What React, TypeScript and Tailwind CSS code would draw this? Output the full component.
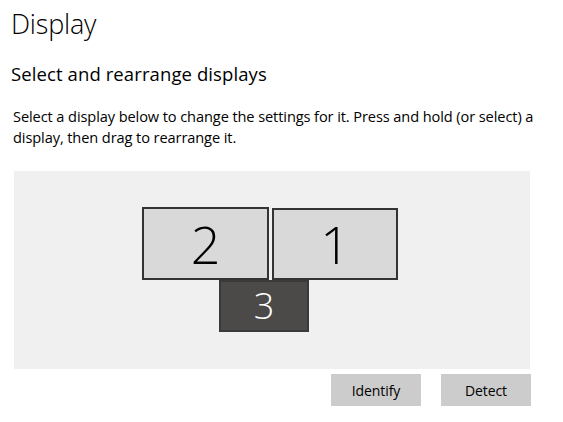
import React from "react";

type Monitor = {
  id: number;
  left: number;
  top: number;
  width: number;
  height: number;
  active?: boolean;
};

const monitors: Monitor[] = [
  { id: 2, left: 128, top: 36, width: 127, height: 73 },
  { id: 1, left: 258, top: 37, width: 126, height: 72 },
  { id: 3, left: 205, top: 109, width: 90, height: 52, active: true },
];

const MonitorTile = ({ monitor }: { monitor: Monitor }) => {
  const box = monitor.active
    ? "bg-[#4c4a48] border-[#3a3a3a] text-white text-[36px]"
    : "bg-[#d9d9d9] border-[#333333] text-black text-[52px]";
  return (
    <div
      className={`absolute flex items-center justify-center border-2 font-light leading-none ${box}`}
      style={{
        left: monitor.left,
        top: monitor.top,
        width: monitor.width,
        height: monitor.height,
      }}
    >
      {monitor.id}
    </div>
  );
};

export default function App() {
  return (
    <div className="w-[563px] h-[422px] bg-white text-black font-['Open_Sans','Noto_Sans',sans-serif] overflow-hidden">
      <div className="pl-[11px] pt-[6px]">
        <h1 className="text-[27px] font-light leading-[36px] tracking-[-0.2px]">Display</h1>
        <h2 className="mt-[19px] text-[18.5px] leading-[26px] tracking-[0.1px]">
          Select and rearrange displays
        </h2>
        <p className="mt-[19px] pl-[2px] w-[535px] text-[14.6px] leading-[21px] tracking-[-0.1px]">
          Select a display below to change the settings for it. Press and hold (or select) a
          display, then drag to rearrange it.
        </p>
      </div>

      <div className="relative ml-[14px] mt-[23px] w-[516px] h-[198px] bg-[#f0f0f0]">
        {monitors.map((m) => (
          <MonitorTile key={m.id} monitor={m} />
        ))}
      </div>

      <div className="flex justify-end gap-[20px] w-[531px] mt-[5px]">
        <button className="w-[90px] h-[32px] bg-[#cccccc] text-[14px] tracking-[-0.1px]">Identify</button>
        <button className="w-[90px] h-[32px] bg-[#cccccc] text-[14px] tracking-[-0.1px]">Detect</button>
      </div>
    </div>
  );
}
